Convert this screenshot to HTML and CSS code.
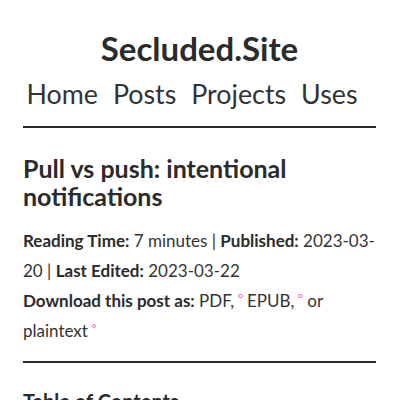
FILE: index.html
```html
<!DOCTYPE html>
<html lang="en">
<head>
<meta charset="utf-8">
<title>Pull vs push: intentional notifications</title>
<link rel="stylesheet" href="styles.css">
</head>
<body>
<header class="site-header">
  <div class="site-title">Secluded.Site</div>
  <nav class="site-nav">
    <a href="#">Home</a>
    <a href="#">Posts</a>
    <a href="#">Projects</a>
    <a href="#">Uses</a>
  </nav>
</header>
<hr class="rule">
<main class="post">
  <h1 class="post-title">Pull vs push: intentional notifications</h1>
  <p class="meta"><strong>Reading Time:</strong> 7 minutes | <strong>Published:</strong> 2023-03-20 | <strong>Last Edited:</strong> 2023-03-22</p>
  <p class="meta"><strong>Download this post as:</strong> <a href="#" class="ext">PDF,</a> <a href="#" class="ext">EPUB,</a> or <a href="#" class="ext">plaintext</a></p>
  <hr class="rule">
  <h2 class="toc-title">Table of Contents</h2>
</main>
</body>
</html>
```
FILE: styles.css
```css
html, body {
  margin: 0;
  padding: 0;
  background: #fff;
}
body {
  font-family: Lato, "Open Sans", sans-serif;
  color: #333;
  padding: 0 24px 0 23px;
}
a {
  color: inherit;
  text-decoration: none;
}
.site-header {
  text-align: center;
  padding-top: 26px;
}
.site-title {
  font-size: 33px;
  font-weight: 700;
  color: #2b2b2b;
  line-height: 44px;
}
.site-nav {
  display: flex;
  justify-content: center;
  font-size: 26.8px;
  line-height: 40px;
  margin-top: 4px;
}
.site-nav a {
  margin-right: 15px;
}
.rule {
  border: none;
  height: 2px;
  background: #2a2a2a;
  margin: 12px 0 0;
}
.post-title {
  font-size: 25px;
  line-height: 28px;
  font-weight: 700;
  color: #2b2b2b;
  margin: 26px 0 16px;
}
.meta {
  font-size: 17px;
  line-height: 30px;
  margin: 0;
}
.meta strong {
  color: #2b2b2b;
}
.ext::after {
  content: "";
  display: inline-block;
  width: 2.5px;
  height: 2.5px;
  border: 1.5px solid #e070d0;
  border-radius: 50%;
  vertical-align: 9px;
  margin-left: 4px;
}
.post .rule {
  margin-top: 15px;
}
.toc-title {
  font-size: 20px;
  color: #2b2b2b;
  margin: 26px 0 0;
}
```
